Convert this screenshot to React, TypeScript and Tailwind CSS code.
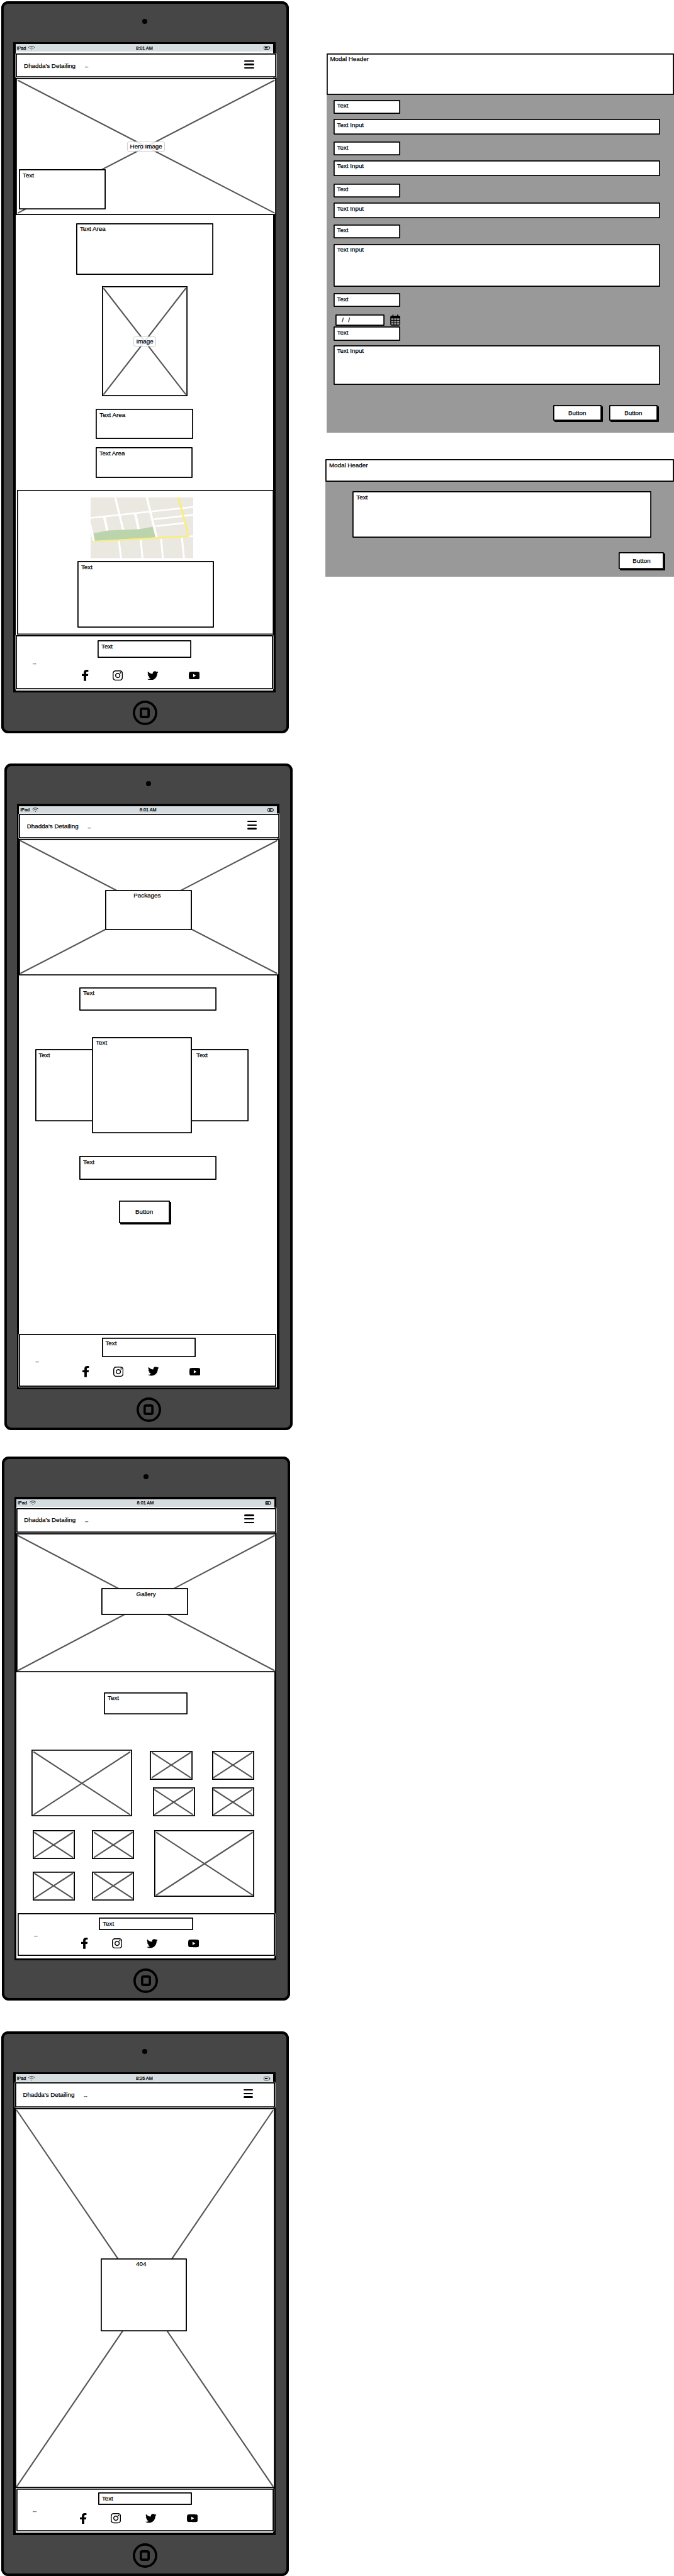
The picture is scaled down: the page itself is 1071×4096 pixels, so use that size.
import type { ReactNode } from "react";
import { FaFacebookF, FaInstagram, FaTwitter, FaYoutube } from "react-icons/fa";

type WithClass = { className?: string; children?: ReactNode };

/* White rectangle with a pen-like outline. */
function Box({ className = "", children }: WithClass) {
  return (
    <div
      className={`shrink-0 rounded-[1px] bg-white pt-[3.6px] pl-[5.8px] text-[9.8px] leading-[12px] shadow-[inset_0_0_0_1.8px_#000] ${className}`}
    >
      {children}
    </div>
  );
}

function Cross() {
  return (
    <svg className="absolute top-[3.5px] left-[3.5px] h-[calc(100%-7px)] w-[calc(100%-7px)] overflow-visible" stroke="#585858" strokeWidth="2.2" strokeLinecap="round">
      <line x1="0" y1="0" x2="100%" y2="100%" />
      <line x1="100%" y1="0" x2="0" y2="100%" />
    </svg>
  );
}

/* Crossed-out image placeholder. */
function Picture({ className = "", children }: WithClass) {
  return (
    <div className={`relative flex shrink-0 bg-white shadow-[inset_0_0_0_1.8px_#000] ${className}`}>
      <Cross />
      {children}
    </div>
  );
}

function Label({ className = "", children }: WithClass) {
  return (
    <span
      className={`relative m-auto flex items-center justify-center rounded-[3px] border border-[#d0d0d0] bg-white/85 text-[9.8px] leading-none whitespace-nowrap ${className}`}
    >
      {children}
    </span>
  );
}

function PushButton({ className = "" }: { className?: string }) {
  return (
    <button
      className={`block shrink-0 rounded-[1px] bg-white text-center text-[9.8px] leading-none shadow-[inset_0_0_0_1.8px_#000,2px_2px_0_0_#000] ${className}`}
    >
      Button
    </button>
  );
}

function StatusBar({ time, className = "h-[12px]" }: { time: string; className?: string }) {
  return (
    <div className={`relative flex shrink-0 items-center justify-between bg-[#d6dde0] pr-[4.5px] pl-[2px] text-[7.3px] leading-none ${className}`}>
      <span className="flex items-center gap-[4px]">
        iPad
        <svg className="h-[7.4px] w-[10.4px]" viewBox="0 0 21 15" fill="none" stroke="#111" strokeWidth="1.7" strokeLinecap="round">
          <path d="M1 5C6 0 15 0 20 5M5 8.6c3-3 8-3 11 0" />
          <circle cx="10.5" cy="12.8" r="1.3" fill="#111" stroke="none" />
        </svg>
      </span>
      <span className="absolute inset-x-0 text-center">{time}</span>
      <svg className="h-[6px] w-[10.4px]" viewBox="0 0 21 12" fill="none" stroke="#111" strokeWidth="1.8">
        <rect x="1" y="1" width="17" height="10" rx="2.4" />
        <rect x="4" y="4" width="8.5" height="4" fill="#111" stroke="none" />
        <path d="M19.6 3.6v4.8" strokeWidth="1.6" />
      </svg>
    </div>
  );
}

function NavBar({ className = "" }: { className?: string }) {
  return (
    <nav
      className={`relative flex w-[413.6px] shrink-0 items-start rounded-[1px] bg-white pl-[12.7px] shadow-[inset_0_0_0_1.8px_#000,0_0_0_0.6px_#fff] ${className}`}
    >
      <span className="mt-[13.5px] w-[96.5px] text-[9.8px] leading-[12px] whitespace-nowrap">Dhadda's Detailing</span>
      <span className="mt-[16.4px] text-[7px] leading-[8px]">...</span>
      <span className="mt-[10.8px] mr-[35.3px] ml-auto flex flex-col gap-[3.3px]">
        <i className="h-[2.3px] w-[15.5px] rounded-full bg-black" />
        <i className="h-[2.3px] w-[15.5px] rounded-full bg-black" />
        <i className="h-[2.3px] w-[15.5px] rounded-full bg-black" />
      </span>
    </nav>
  );
}

function Footer({ className = "", box = "", icons = "", dots = "" }: { className?: string; box?: string; icons?: string; dots?: string }) {
  return (
    <footer
      className={`relative flex shrink-0 flex-col rounded-[1px] bg-white shadow-[inset_0_0_0_1.8px_#000,0_0_0_0.6px_#fff] ${className}`}
    >
      <Box className={`w-[149.2px] ${box}`}>Text</Box>
      <div className={`flex h-[18px] items-center ${icons}`}>
        <span className={`w-[75.3px] self-start text-[7px] leading-[8px] ${dots}`}>...</span>
        <FaFacebookF className="h-[17.8px] w-[10.6px]" preserveAspectRatio="none" viewBox="22 0 280 512" />
        <FaInstagram className="ml-[38.1px] h-[16.2px] w-[16.2px]" viewBox="0 32 448 448" />
        <FaTwitter className="ml-[39.1px] h-[14.6px] w-[17.6px]" viewBox="0 48 512 416" />
        <FaYoutube className="ml-[47.7px] h-[12.4px] w-[17.4px]" preserveAspectRatio="none" viewBox="15 64 546 384" />
      </div>
    </footer>
  );
}

/* Tablet shell: camera, bezelled screen, home button. */
function Tablet({ className = "", screen = "", children }: { className?: string; screen?: string; children: ReactNode }) {
  return (
    <section className={`flex w-[457.6px] shrink-0 flex-col rounded-[11px] bg-[#464646] shadow-[inset_0_0_0_3.9px_#000] ${className}`}>
      <div className="mx-auto mt-[28.1px] size-[8.2px] shrink-0 rounded-full bg-black" />
      <div className={`mt-[28.4px] ml-[19.6px] flex w-[416.7px] shrink-0 flex-col bg-black p-[3.6px] ${screen}`}>
        <div className="flex w-[409.5px] flex-1 flex-col bg-white">{children}</div>
      </div>
      <div className="mx-auto mt-[12.7px] flex size-[39px] shrink-0 items-center justify-center rounded-full shadow-[inset_0_0_0_3.7px_#000]">
        <div className="h-[17px] w-[16.2px] rounded-[4px] shadow-[inset_0_0_0_3.7px_#000]" />
      </div>
    </section>
  );
}

function StreetMap({ className = "" }: { className?: string }) {
  return (
    <svg className={`shrink-0 ${className}`} viewBox="0 0 534 361" preserveAspectRatio="none">
      <rect width="534" height="361" fill="#ebe8e1" />
      <g stroke="#fff" fill="none">
        <path d="M127-4L170 196" strokeWidth="11" />
        <path d="M292-4L343 238" strokeWidth="12" />
        <path d="M-4 122L538 56M328 130L538 103M338 171L488 152" strokeWidth="10" />
        <path d="M71 116L87 198M232 97L250 190" strokeWidth="13" />
        <path d="M-3 160L17 260" strokeWidth="12" />
        <path d="M147 258L159 365M261 252L270 365M367 246L376 365M475 239L486 365M505 232L538 230" strokeWidth="10" />
      </g>
      <path d="M15 213L90 196L250 189L323 174L338 238L22 257Z" fill="#bcd4ac" />
      <path d="M0 260L505 225L451 0H462L515 235L0 266Z" fill="#fbee75" />
    </svg>
  );
}

function Calendar({ className = "" }: { className?: string }) {
  return (
    <svg className={className} viewBox="0 0 32 36">
      <rect x="0" y="4" width="32" height="32" rx="4" fill="#000" />
      <rect x="7" y="0" width="3" height="7" rx="1.4" fill="#000" />
      <rect x="22" y="0" width="3" height="7" rx="1.4" fill="#000" />
      <g fill="#999">
        <rect x="3" y="12.6" width="7.4" height="5.4" />
        <rect x="12.4" y="12.6" width="7.4" height="5.4" />
        <rect x="21.8" y="12.6" width="7.4" height="5.4" />
        <rect x="3" y="20" width="7.4" height="5.4" />
        <rect x="12.4" y="20" width="7.4" height="5.4" />
        <rect x="21.8" y="20" width="7.4" height="5.4" />
        <rect x="3" y="27.4" width="7.4" height="5.2" />
        <rect x="12.4" y="27.4" width="7.4" height="5.2" />
        <rect x="21.8" y="27.4" width="7.4" height="5.2" />
      </g>
    </svg>
  );
}

function HomeScreen() {
  return (
    <Tablet className="mt-[2.2px] ml-[1.5px] h-[1163.4px]" screen="h-[1034.6px]">
      <StatusBar time="8:01 AM" />
      <NavBar className="mt-[2.6px] ml-[0.7px] h-[38.4px]" />
      <Picture className="mt-[1px] ml-[0.7px] h-[217.4px] w-[413.6px]">
        <Label className="h-[15.4px] w-[59.6px]">Hero Image</Label>
        <Box className="absolute bottom-[8.5px] left-[4.9px] h-[64.4px] w-[137.8px]">Text</Box>
      </Picture>
      <Box className="mt-[12.7px] ml-[96.4px] h-[82.8px] w-[217.5px]">Text Area</Box>
      <Picture className="mt-[18px] ml-[137px] h-[174.7px] w-[136.8px]">
        <Label className="h-[16px] w-[35.6px]">Image</Label>
      </Picture>
      <Box className="mt-[20px] ml-[127.8px] h-[48.4px] w-[154.9px]">Text Area</Box>
      <Box className="mt-[12.6px] ml-[127.2px] h-[48.7px] w-[154.6px]">Text Area</Box>
      <div className="mt-[19.7px] ml-[2.3px] flex h-[230.1px] w-[408px] shrink-0 flex-col bg-white shadow-[inset_0_0_0_1.6px_#000]">
        <StreetMap className="mt-[11.8px] ml-[116.7px] h-[96.5px] w-[163.1px]" />
        <Box className="mt-[4.8px] ml-[96.2px] h-[105.3px] w-[216.9px]">Text</Box>
      </div>
      <Footer
        className="mt-[0.8px] ml-[0.8px] h-[85.8px] w-[408.7px]"
        box="mt-[7.8px] ml-[129.8px] h-[28.3px]"
        icons="mt-[18.6px] pl-[29.7px]"
        dots="-mt-[14.5px] -ml-[3.5px] mr-[3.5px]"
      />
    </Tablet>
  );
}

function PackagesScreen() {
  return (
    <Tablet className="mt-[48.2px] ml-[7.3px] h-[1059.8px]" screen="h-[930.7px]">
      <StatusBar time="8:01 AM" />
      <NavBar className="mt-[0.2px] -ml-[0.5px] h-[38.4px]" />
      <Picture className="mt-[0.9px] -ml-[0.5px] h-[217.6px] w-[413.6px]">
        <Box className="relative mt-[81.3px] ml-[137.5px] h-[64.4px] w-[137.8px] pr-[11px] text-center">Packages</Box>
      </Picture>
      <Box className="mt-[18.6px] ml-[95.8px] h-[37.3px] w-[217.8px]">Text</Box>
      <div className="mt-[41.6px] ml-[25.2px] flex shrink-0 items-center">
        <Box className="h-[114.7px] w-[92px]">Text</Box>
        <Box className="z-10 -ml-[1.3px] h-[153.8px] w-[158.9px]">Text</Box>
        <Box className="-ml-[3px] h-[114.7px] w-[92.8px] pl-[9.8px]">Text</Box>
      </div>
      <Box className="mt-[35.6px] ml-[95.8px] h-[37.8px] w-[217.8px]">Text</Box>
      <PushButton className="mt-[33.5px] ml-[158.1px] h-[35.4px] w-[81px]" />
      <Footer
        className="mt-[176.8px] -ml-[0.5px] h-[83.4px] w-[409.1px]"
        box="mt-[5.2px] ml-[131.7px] h-[31.8px]"
        icons="mt-[13.3px] pl-[26.2px]"
        dots="-mt-[11.4px]"
      />
    </Tablet>
  );
}

function GalleryScreen() {
  return (
    <Tablet className="mt-[42.1px] ml-[3px] h-[865.8px]" screen="h-[736.8px]">
      <StatusBar time="8:01 AM" />
      <NavBar className="mt-[1.7px] -ml-[0.7px] h-[39.5px]" />
      <Picture className="mt-[0.9px] -ml-[0.7px] h-[221.1px] w-[413.6px]">
        <Box className="relative mt-[87.3px] ml-[135.9px] h-[42.4px] w-[137.7px] pr-[2px] text-center">Gallery</Box>
      </Picture>
      <Box className="mt-[31.5px] ml-[139.1px] h-[35.2px] w-[133.1px]">Text</Box>
      <div className="mt-[56.4px] ml-[24.3px] flex shrink-0">
        <Picture className="h-[106.2px] w-[159.2px]" />
        <div className="mt-[1.5px] ml-[28.7px] flex flex-col gap-[12.4px]">
          <div className="flex gap-[31.4px]">
            <Picture className="h-[46.1px] w-[67.2px]" />
            <Picture className="h-[46.1px] w-[67.2px]" />
          </div>
          <div className="flex gap-[27.1px] pl-[4.5px]">
            <Picture className="h-[46.1px] w-[67px]" />
            <Picture className="h-[46.1px] w-[67.2px]" />
          </div>
        </div>
      </div>
      <div className="mt-[21.9px] ml-[25.8px] flex shrink-0">
        <div className="flex flex-col gap-[19.6px]">
          <div className="flex gap-[27.2px]">
            <Picture className="h-[46.1px] w-[67.2px]" />
            <Picture className="h-[46.1px] w-[66.9px]" />
          </div>
          <div className="flex gap-[27.2px]">
            <Picture className="h-[46.1px] w-[67.2px]" />
            <Picture className="h-[46.1px] w-[66.9px]" />
          </div>
        </div>
        <Picture className="ml-[32.1px] h-[105.9px] w-[158.8px]" />
      </div>
      <Footer
        className="mt-[20.4px] ml-[1.4px] h-[68px] w-[409px]"
        box="mt-[7px] ml-[129.8px] h-[19.5px]"
        icons="mt-[12.4px] pl-[26.4px]"
        dots="-mt-[8px]"
      />
    </Tablet>
  );
}

function NotFoundScreen() {
  return (
    <Tablet className="mt-[48.5px] ml-[1.5px] h-[866px]" screen="h-[736.3px]">
      <StatusBar time="8:26 AM" className="h-[13px]" />
      <NavBar className="mt-[0.1px] -ml-[0.9px] h-[39.9px]" />
      <Picture className="mt-[0.8px] -ml-[0.9px] h-[604.1px] w-[413.6px]">
        <Box className="relative mt-[238.6px] ml-[136px] h-[116.2px] w-[137.7px] pr-[14.6px] text-center">404</Box>
      </Picture>
      <Footer
        className="mt-[0.9px] ml-[1px] h-[67.8px] w-[409.3px]"
        box="mt-[6.3px] ml-[130.4px] h-[20px]"
        icons="mt-[12.2px] pl-[26.4px]"
        dots="-mt-[7.9px]"
      />
    </Tablet>
  );
}

function BookingModal() {
  return (
    <section className="mt-[84.7px] ml-[10.6px] flex h-[602.9px] w-[552.4px] shrink-0 flex-col bg-[#999]">
      <Box className="h-[66.3px] w-[552.2px]">Modal Header</Box>
      <Box className="mt-[7.8px] ml-[11.2px] h-[22.2px] w-[106.6px]">Text</Box>
      <Box className="mt-[8px] ml-[11.2px] h-[24.8px] w-[519.5px]">Text Input</Box>
      <Box className="mt-[11.5px] ml-[11.2px] h-[21.9px] w-[106.6px]">Text</Box>
      <Box className="mt-[7.5px] ml-[11.2px] h-[24.9px] w-[519.5px]">Text Input</Box>
      <Box className="mt-[12.3px] ml-[11.2px] h-[21.9px] w-[106.6px]">Text</Box>
      <Box className="mt-[8.3px] ml-[11.2px] h-[24.8px] w-[519.5px]">Text Input</Box>
      <Box className="mt-[9.9px] ml-[11.2px] h-[22.5px] w-[106.6px]">Text</Box>
      <Box className="mt-[8.3px] ml-[11.2px] h-[68.4px] w-[519.5px]">Text Input</Box>
      <Box className="mt-[10.2px] ml-[11.2px] h-[22.1px] w-[106.6px]">Text</Box>
      <div className="mt-[11.7px] ml-[14.8px] flex h-[18.3px] shrink-0 items-center">
        <Box className="flex h-[18.3px] w-[77.4px] gap-[7.4px] pt-[3.2px] pl-[9.8px]">
          <span>/</span>
          <span>/</span>
        </Box>
        <Calendar className="ml-[9.2px] h-[17.8px] w-[16.2px]" />
      </div>
      <Box className="mt-[1px] ml-[11.2px] h-[22.6px] w-[106.6px]">Text</Box>
      <Box className="mt-[7px] ml-[11.2px] h-[62.9px] w-[519.5px]">Text Input</Box>
      <div className="mt-[32.7px] mr-[26.2px] flex shrink-0 justify-end gap-[12.3px]">
        <PushButton className="h-[24.8px] w-[76.9px]" />
        <PushButton className="h-[24.8px] w-[76.9px]" />
      </div>
    </section>
  );
}

function MessageModal() {
  return (
    <section className="mt-[42.4px] ml-[9.1px] flex h-[186.7px] w-[553.9px] shrink-0 flex-col bg-[#999]">
      <Box className="h-[36.4px] w-[553.6px]">Modal Header</Box>
      <Box className="mt-[14.9px] ml-[43.4px] h-[73.4px] w-[474.6px]">Text</Box>
      <PushButton className="mt-[23.5px] mr-[15.5px] h-[26.6px] w-[72px] self-end" />
    </section>
  );
}

export default function App() {
  return (
    <main className="flex h-[4096px] w-[1071px] overflow-hidden bg-white font-['Liberation_Sans',Arial,sans-serif] text-black [-webkit-text-stroke:0.25px_#000]">
      <div className="flex w-[508px] shrink-0 flex-col">
        <HomeScreen />
        <PackagesScreen />
        <GalleryScreen />
        <NotFoundScreen />
      </div>
      <div className="flex w-[563px] shrink-0 flex-col">
        <BookingModal />
        <MessageModal />
      </div>
    </main>
  );
}
